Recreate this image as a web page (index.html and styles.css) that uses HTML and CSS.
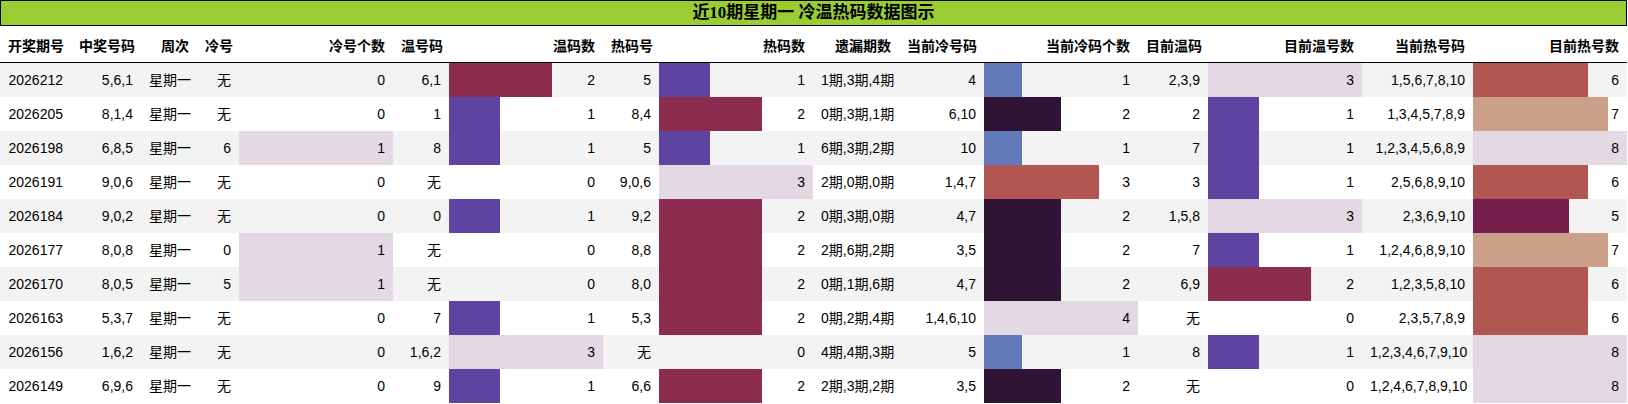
FILE: index.html
```html
<!DOCTYPE html>
<html lang="zh-CN">
<head>
<meta charset="utf-8">
<title>近10期星期一 冷温热码数据图示</title>
<link rel="stylesheet" href="styles.css">
</head>
<body>
<div class="sheet">
  <div class="title">近10期星期一 冷温热码数据图示</div>
  <table class="grid">
    <colgroup>
      <col class="w71"><col class="w70"><col class="w56"><col class="w42">
      <col class="wbar"><col class="w56"><col class="wbar"><col class="w56">
      <col class="wbar"><col class="w86"><col class="w85"><col class="wbar">
      <col class="w70"><col class="wbar"><col class="w111"><col class="wbar">
    </colgroup>
    <thead>
      <tr>
        <th>开奖期号</th><th>中奖号码</th><th>周次</th><th>冷号</th>
        <th>冷号个数</th><th>温号码</th><th>温码数</th><th>热码号</th>
        <th>热码数</th><th>遗漏期数</th><th>当前冷号码</th><th>当前冷码个数</th>
        <th>目前温码</th><th>目前温号数</th><th>当前热号码</th><th>目前热号数</th>
      </tr>
    </thead>
    <tbody>
      <tr>
        <td>2026212</td><td>5,6,1</td><td>星期一</td><td>无</td>
        <td>0</td><td>6,1</td><td class="bar c67" style="--w:66.667%">2</td><td>5</td>
        <td class="bar c33" style="--w:33.333%">1</td><td>1期,3期,4期</td><td>4</td><td class="bar c25" style="--w:25%">1</td>
        <td>2,3,9</td><td class="bar c100" style="--w:100%">3</td><td>1,5,6,7,8,10</td><td class="bar c75" style="--w:75%">6</td>
      </tr>
      <tr>
        <td>2026205</td><td>8,1,4</td><td>星期一</td><td>无</td>
        <td>0</td><td>1</td><td class="bar c33" style="--w:33.333%">1</td><td>8,4</td>
        <td class="bar c67" style="--w:66.667%">2</td><td>0期,3期,1期</td><td>6,10</td><td class="bar c50" style="--w:50%">2</td>
        <td>2</td><td class="bar c33" style="--w:33.333%">1</td><td>1,3,4,5,7,8,9</td><td class="bar c88" style="--w:87.5%">7</td>
      </tr>
      <tr>
        <td>2026198</td><td>6,8,5</td><td>星期一</td><td>6</td>
        <td class="bar c100" style="--w:100%">1</td><td>8</td><td class="bar c33" style="--w:33.333%">1</td><td>5</td>
        <td class="bar c33" style="--w:33.333%">1</td><td>6期,3期,2期</td><td>10</td><td class="bar c25" style="--w:25%">1</td>
        <td>7</td><td class="bar c33" style="--w:33.333%">1</td><td>1,2,3,4,5,6,8,9</td><td class="bar c100" style="--w:100%">8</td>
      </tr>
      <tr>
        <td>2026191</td><td>9,0,6</td><td>星期一</td><td>无</td>
        <td>0</td><td>无</td><td>0</td><td>9,0,6</td>
        <td class="bar c100" style="--w:100%">3</td><td>2期,0期,0期</td><td>1,4,7</td><td class="bar c75" style="--w:75%">3</td>
        <td>3</td><td class="bar c33" style="--w:33.333%">1</td><td>2,5,6,8,9,10</td><td class="bar c75" style="--w:75%">6</td>
      </tr>
      <tr>
        <td>2026184</td><td>9,0,2</td><td>星期一</td><td>无</td>
        <td>0</td><td>0</td><td class="bar c33" style="--w:33.333%">1</td><td>9,2</td>
        <td class="bar c67" style="--w:66.667%">2</td><td>0期,3期,0期</td><td>4,7</td><td class="bar c50" style="--w:50%">2</td>
        <td>1,5,8</td><td class="bar c100" style="--w:100%">3</td><td>2,3,6,9,10</td><td class="bar c63" style="--w:62.5%">5</td>
      </tr>
      <tr>
        <td>2026177</td><td>8,0,8</td><td>星期一</td><td>0</td>
        <td class="bar c100" style="--w:100%">1</td><td>无</td><td>0</td><td>8,8</td>
        <td class="bar c67" style="--w:66.667%">2</td><td>2期,6期,2期</td><td>3,5</td><td class="bar c50" style="--w:50%">2</td>
        <td>7</td><td class="bar c33" style="--w:33.333%">1</td><td>1,2,4,6,8,9,10</td><td class="bar c88" style="--w:87.5%">7</td>
      </tr>
      <tr>
        <td>2026170</td><td>8,0,5</td><td>星期一</td><td>5</td>
        <td class="bar c100" style="--w:100%">1</td><td>无</td><td>0</td><td>8,0</td>
        <td class="bar c67" style="--w:66.667%">2</td><td>0期,1期,6期</td><td>4,7</td><td class="bar c50" style="--w:50%">2</td>
        <td>6,9</td><td class="bar c67" style="--w:66.667%">2</td><td>1,2,3,5,8,10</td><td class="bar c75" style="--w:75%">6</td>
      </tr>
      <tr>
        <td>2026163</td><td>5,3,7</td><td>星期一</td><td>无</td>
        <td>0</td><td>7</td><td class="bar c33" style="--w:33.333%">1</td><td>5,3</td>
        <td class="bar c67" style="--w:66.667%">2</td><td>0期,2期,4期</td><td>1,4,6,10</td><td class="bar c100" style="--w:100%">4</td>
        <td>无</td><td>0</td><td>2,3,5,7,8,9</td><td class="bar c75" style="--w:75%">6</td>
      </tr>
      <tr>
        <td>2026156</td><td>1,6,2</td><td>星期一</td><td>无</td>
        <td>0</td><td>1,6,2</td><td class="bar c100" style="--w:100%">3</td><td>无</td>
        <td>0</td><td>4期,4期,3期</td><td>5</td><td class="bar c25" style="--w:25%">1</td>
        <td>8</td><td class="bar c33" style="--w:33.333%">1</td><td>1,2,3,4,6,7,9,10</td><td class="bar c100" style="--w:100%">8</td>
      </tr>
      <tr>
        <td>2026149</td><td>6,9,6</td><td>星期一</td><td>无</td>
        <td>0</td><td>9</td><td class="bar c33" style="--w:33.333%">1</td><td>6,6</td>
        <td class="bar c67" style="--w:66.667%">2</td><td>2期,3期,2期</td><td>3,5</td><td class="bar c50" style="--w:50%">2</td>
        <td>无</td><td>0</td><td>1,2,4,6,7,8,9,10</td><td class="bar c100" style="--w:100%">8</td>
      </tr>
    </tbody>
  </table>
</div>
</body>
</html>
```
FILE: styles.css
```css
html, body {
  margin: 0;
  padding: 0;
  background: #ffffff;
}

.sheet {
  width: 1627px;
}

.title {
  height: 24px;
  line-height: 24px;
  border: 1px solid #000000;
  background: #9acd32;
  color: #000000;
  text-align: center;
  font-family: "Liberation Serif", "Noto Sans CJK SC", serif;
  font-weight: bold;
  font-size: 17px;
}

.grid {
  width: 1627px;
  border-collapse: collapse;
  border-spacing: 0;
  table-layout: fixed;
  font-family: "Liberation Sans", "Noto Sans CJK SC", sans-serif;
  font-size: 14px;
  color: #000000;
}

.w42 { width: 42px; }
.w56 { width: 56px; }
.w70 { width: 70px; }
.w71 { width: 71px; }
.w85 { width: 85px; }
.w86 { width: 86px; }
.w111 { width: 111px; }
.wbar { width: 154px; }

.grid th {
  padding: 10px 8px 6px;
  line-height: 20px;
  font-weight: bold;
  text-align: right;
  white-space: nowrap;
  border-bottom: 1px solid #000000;
}

.grid td {
  padding: 7px 8px;
  height: 20px;
  line-height: 20px;
  text-align: right;
  white-space: nowrap;
  background-color: #ffffff;
}

.grid tbody tr:nth-child(odd) td {
  background-color: #f3f3f3;
}

.grid td.bar {
  background-image: linear-gradient(90deg, var(--c) var(--w), transparent var(--w));
}

.c25 { --c: #6279ba; }
.c33 { --c: #5e43a1; }
.c50 { --c: #2f1436; }
.c63 { --c: #781e4d; }
.c67 { --c: #8c2c4f; }
.c75 { --c: #b15651; }
.c88 { --c: #cba089; }
.c100 { --c: #e2d9e2; }
```
